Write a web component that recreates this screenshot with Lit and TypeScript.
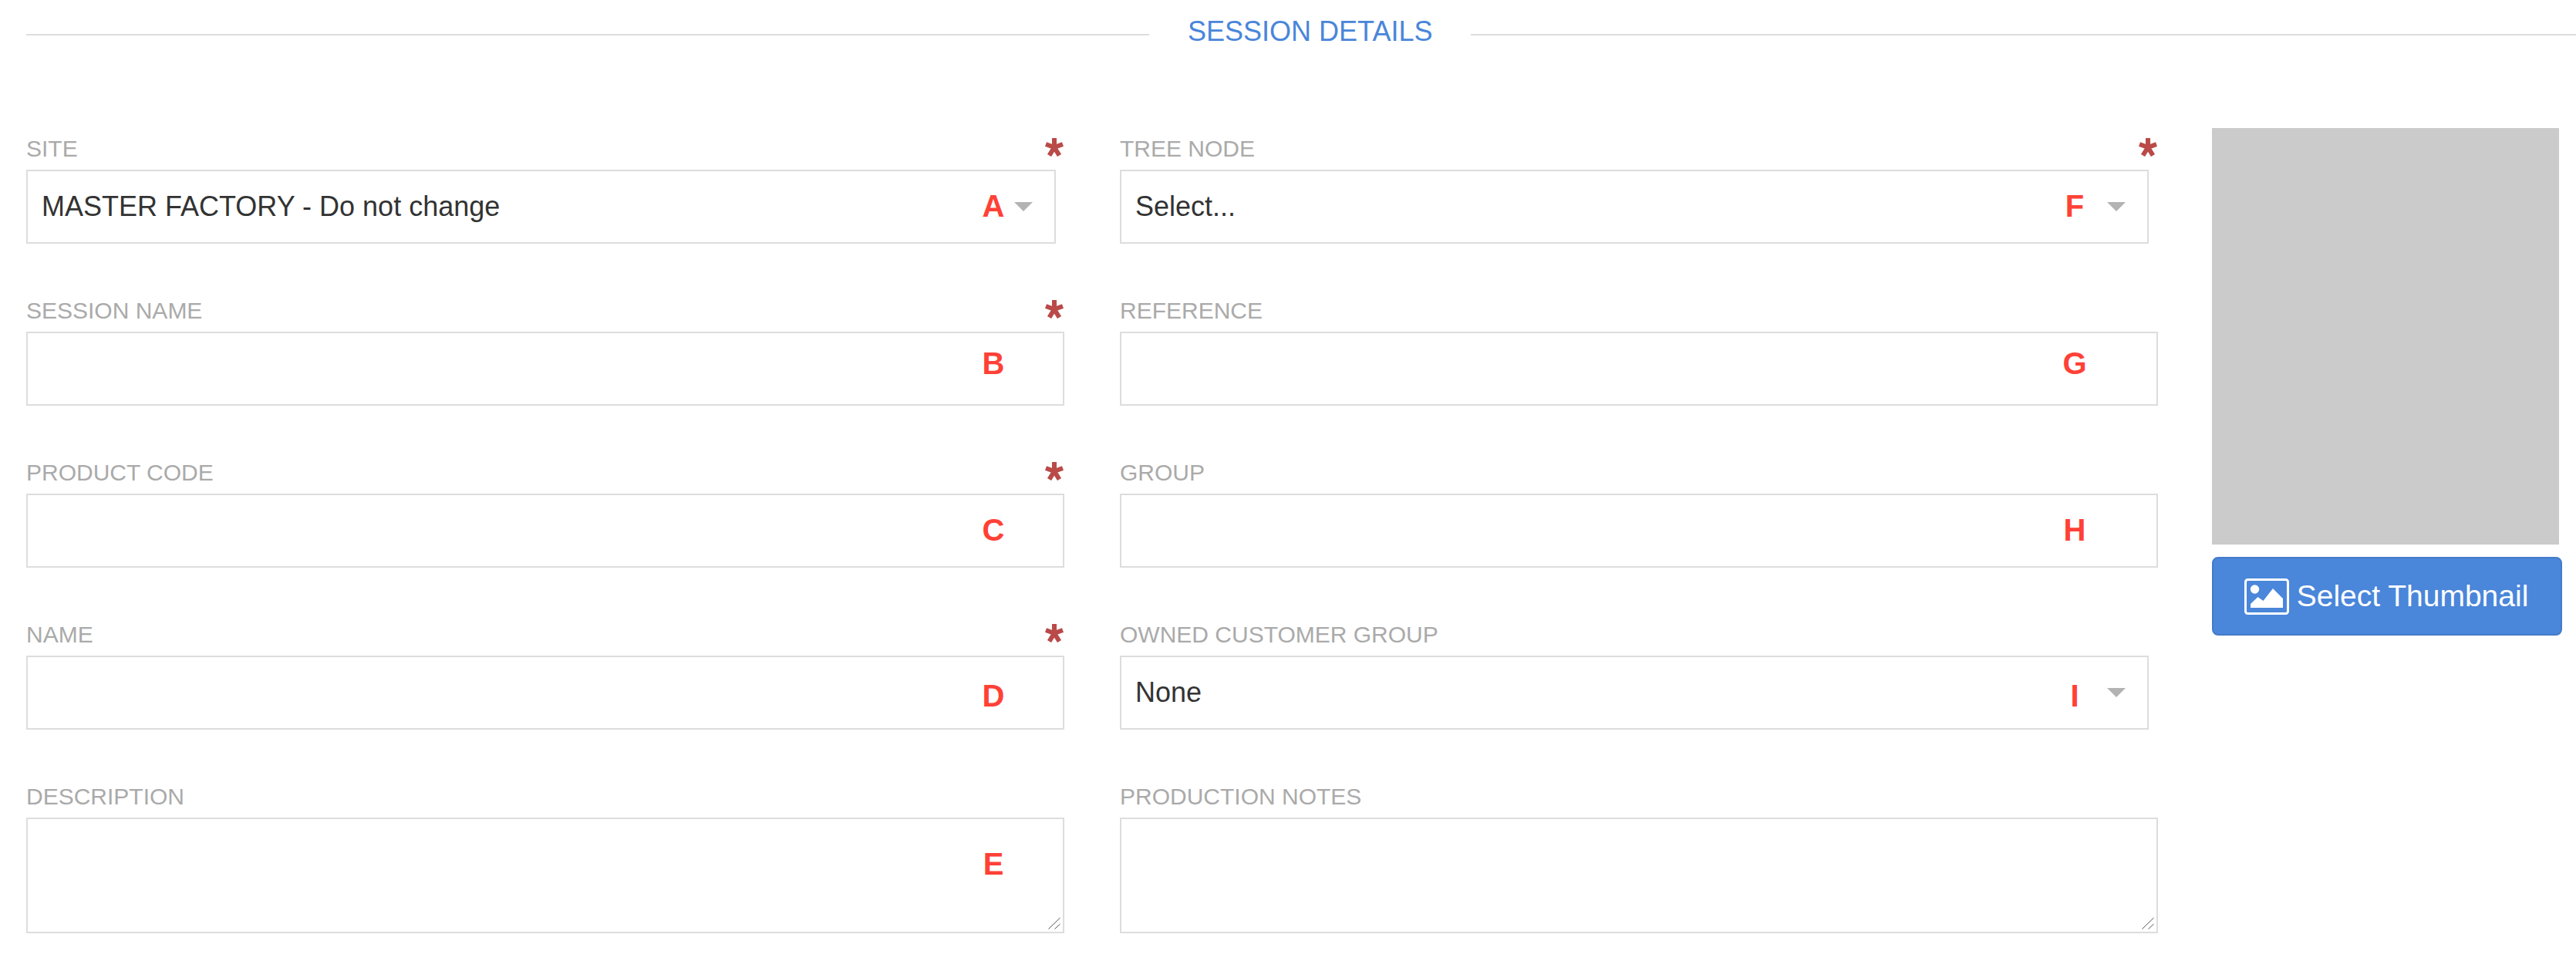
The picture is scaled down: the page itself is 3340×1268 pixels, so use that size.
import { LitElement, html, css, svg } from 'lit';
import { customElement } from 'lit/decorators.js';

interface Field {
  label: string;
  kind: 'input' | 'select' | 'textarea';
  value?: string;
  required?: boolean;
  mark?: string;
  // centre of the red marker, measured from the top of the box
  markY?: number;
}

const LEFT: Field[] = [
  { label: 'SITE', kind: 'select', value: 'MASTER FACTORY - Do not change', required: true, mark: 'A', markY: 47 },
  { label: 'SESSION NAME', kind: 'input', required: true, mark: 'B', markY: 41 },
  { label: 'PRODUCT CODE', kind: 'input', required: true, mark: 'C', markY: 47 },
  { label: 'NAME', kind: 'input', required: true, mark: 'D', markY: 52 },
  { label: 'DESCRIPTION', kind: 'textarea', mark: 'E', markY: 60 },
];

const RIGHT: Field[] = [
  { label: 'TREE NODE', kind: 'select', value: 'Select...', required: true, mark: 'F', markY: 47 },
  { label: 'REFERENCE', kind: 'input', mark: 'G', markY: 41 },
  { label: 'GROUP', kind: 'input', mark: 'H', markY: 47 },
  { label: 'OWNED CUSTOMER GROUP', kind: 'select', value: 'None', mark: 'I', markY: 52 },
  { label: 'PRODUCTION NOTES', kind: 'textarea' },
];

const asterisk = svg`<svg class="req" viewBox="0 0 24 24" width="24" height="24">
  <path d="M12 0v12M12 12L1 8M12 12l11-4M12 12l-6.5 10.5M12 12l6.5 10.5" fill="none" stroke="currentColor" stroke-width="6"/>
</svg>`;

const grip = svg`<svg class="grip" viewBox="0 0 16 16" width="16" height="16">
  <path d="M0.5 15.5L15.5 1M8.5 15.5L15.5 9" fill="none" stroke="#555" stroke-width="1"/>
</svg>`;

@customElement('app-root')
export class AppRoot extends LitElement {
  static styles = css`
    :host {
      display: block;
      height: 1268px;
      background: #fff;
      font-family: 'Liberation Sans', Arial, sans-serif;
      box-sizing: border-box;
      padding: 26px 0 0 34px;
    }
    .heading {
      display: flex;
      align-items: center;
      gap: 50px;
      height: 38px;
      color: #4a86da;
      font-size: 36px;
    }
    .heading i {
      flex: 1;
      height: 2px;
      background: #ddd;
    }
    .heading i:first-child {
      flex: 0 0 1456px;
    }
    .heading span {
      margin-bottom: 8px;
    }
    .body {
      display: grid;
      grid-template-columns: 1346px 1346px 454px;
      column-gap: 72px;
      margin-top: 108px;
    }
    .col {
      display: flex;
      flex-direction: column;
      gap: 66px;
    }
    .col:nth-child(2) .mark {
      left: 1238px;
    }
    .col:nth-child(2) .select {
      width: calc(100% - 12px);
    }
    .field {
      position: relative;
      display: flex;
      flex-direction: column;
      gap: 8px;
    }
    label {
      color: #aaa;
      font-size: 30px;
      line-height: 42px;
      height: 40px;
    }
    .box {
      box-sizing: border-box;
      display: block;
      width: 100%;
      height: 96px;
      border: 2px solid #ddd;
      border-radius: 0;
      background: #fff;
      outline: none;
      padding: 0 18px;
      color: #333;
      font: 36px 'Liberation Sans', Arial, sans-serif;
    }
    textarea.box {
      height: 150px;
      resize: none;
    }
    .select {
      display: flex;
      align-items: center;
      justify-content: space-between;
      width: calc(100% - 11px);
      padding-right: 28px;
    }
    .caret {
      width: 0;
      height: 0;
      border-left: 12px solid transparent;
      border-right: 12px solid transparent;
      border-top: 12px solid #b3b3b3;
    }
    .req {
      position: absolute;
      top: 7px;
      right: 1px;
      color: #b94a48;
    }
    .grip {
      position: absolute;
      right: 5px;
      bottom: 5px;
    }
    .mark {
      position: absolute;
      left: 1254px;
      transform: translate(-50%, -50%);
      color: #ff4136;
      font-size: 40px;
      font-weight: 700;
      line-height: 1;
    }
    .thumb {
      display: flex;
      flex-direction: column;
      gap: 16px;
      margin: -6px 0 0 -2px;
    }
    .preview {
      width: 450px;
      height: 540px;
      background: #cbcbcb;
    }
    button {
      display: flex;
      align-items: center;
      justify-content: center;
      gap: 10px;
      box-sizing: border-box;
      width: 454px;
      height: 102px;
      padding: 0 2px 0 0;
      background: #4a86da;
      border: 2px solid #437bc9;
      border-radius: 8px;
      color: #fff;
      font: 39px 'Liberation Sans', Arial, sans-serif;
    }
  `;

  private renderField(f: Field) {
    const boxTop = 40 + 8;
    return html`<div class="field">
      <label>${f.label}</label>
      ${f.kind === 'select'
        ? html`<div class="box select"><span>${f.value}</span><span class="caret"></span></div>`
        : f.kind === 'textarea'
          ? html`<textarea class="box"></textarea>${grip}`
          : html`<input class="box" type="text" />`}
      ${f.required ? asterisk : ''}
      ${f.mark
        ? html`<span class="mark" style="top: ${boxTop + (f.markY ?? 0)}px">${f.mark}</span>`
        : ''}
    </div>`;
  }

  render() {
    return html`
      <div class="heading"><i></i><span>SESSION DETAILS</span><i></i></div>
      <div class="body">
        <div class="col">${LEFT.map((f) => this.renderField(f))}</div>
        <div class="col">${RIGHT.map((f) => this.renderField(f))}</div>
        <div class="thumb">
          <div class="preview"></div>
          <button>
            <svg width="58" height="47" viewBox="0 0 58 47">
              <rect x="1.5" y="1.5" width="55" height="44" rx="3" fill="none" stroke="#fff" stroke-width="3"/>
              <circle cx="13.5" cy="14" r="5.7" fill="#fff"/>
              <path d="M8 38v-5l9.5-9 7 5 12.5-16 13 13v12z" fill="#fff"/>
            </svg>
            <span>Select Thumbnail</span>
          </button>
        </div>
      </div>
    `;
  }
}
